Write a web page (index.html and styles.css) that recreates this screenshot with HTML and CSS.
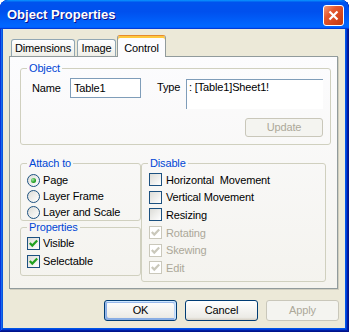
FILE: index.html
```html
<!DOCTYPE html>
<html>
<head>
<meta charset="utf-8">
<link rel="stylesheet" href="styles.css">
</head>
<body>
<div class="window">
  <div class="titlebar">
    <span class="title">Object Properties</span>
    <span class="close"><svg width="13" height="13" viewBox="0 0 13 13"><path d="M2.5 2.5 L10.5 10.5 M10.5 2.5 L2.5 10.5" stroke="#fff" stroke-width="2.2" fill="none"/></svg></span>
  </div>
  <div class="client">
    <div class="tabs">
      <div class="tab t-dim">Dimensions</div>
      <div class="tab t-img">Image</div>
      <div class="tab sel">Control</div>
    </div>
    <div class="panel">
      <fieldset class="grp g-object">
        <legend>Object</legend>
        <div class="gbody">
          <div class="obj-row">
            <span class="lbl-name">Name</span>
            <div class="input">Table1</div>
            <span class="lbl-type">Type</span>
            <div class="typebox">: [Table1]Sheet1!</div>
          </div>
          <div class="upd-row"><div class="btn dis upd">Update</div></div>
        </div>
      </fieldset>
      <div class="cols">
        <div class="leftcol">
          <fieldset class="grp g-attach">
            <legend>Attach to</legend>
            <div class="gbody">
              <div class="row r16"><span class="radio on"></span><span>Page</span></div>
              <div class="row r16"><span class="radio"></span><span>Layer Frame</span></div>
              <div class="row r16"><span class="radio"></span><span>Layer and Scale</span></div>
            </div>
          </fieldset>
          <fieldset class="grp g-props">
            <legend>Properties</legend>
            <div class="gbody">
              <div class="row r18"><span class="cb"><svg width="11" height="11" viewBox="0 0 11 11"><path d="M1.8 5 L4.3 7.6 L9.2 2.6" stroke="#21a121" stroke-width="2.2" fill="none"/></svg></span><span>Visible</span></div>
              <div class="row r18"><span class="cb"><svg width="11" height="11" viewBox="0 0 11 11"><path d="M1.8 5 L4.3 7.6 L9.2 2.6" stroke="#21a121" stroke-width="2.2" fill="none"/></svg></span><span>Selectable</span></div>
            </div>
          </fieldset>
        </div>
        <fieldset class="grp g-disable">
          <legend>Disable</legend>
          <div class="gbody">
            <div class="row r17"><span class="cb"></span><span>Horizontal&nbsp; Movement</span></div>
            <div class="row r17"><span class="cb"></span><span>Vertical Movement</span></div>
            <div class="row r17"><span class="cb"></span><span>Resizing</span></div>
            <div class="row r17 off"><span class="cb"><svg width="11" height="11" viewBox="0 0 11 11"><path d="M1.8 5 L4.3 7.6 L9.2 2.6" stroke="#cac8bb" stroke-width="2.2" fill="none"/></svg></span><span>Rotating</span></div>
            <div class="row r17 off"><span class="cb"><svg width="11" height="11" viewBox="0 0 11 11"><path d="M1.8 5 L4.3 7.6 L9.2 2.6" stroke="#cac8bb" stroke-width="2.2" fill="none"/></svg></span><span>Skewing</span></div>
            <div class="row r17 off"><span class="cb"><svg width="11" height="11" viewBox="0 0 11 11"><path d="M1.8 5 L4.3 7.6 L9.2 2.6" stroke="#cac8bb" stroke-width="2.2" fill="none"/></svg></span><span>Edit</span></div>
          </div>
        </fieldset>
      </div>
    </div>
    <div class="buttons">
      <div class="btn def">OK</div>
      <div class="btn">Cancel</div>
      <div class="btn dis">Apply</div>
    </div>
  </div>
</div>
</body>
</html>
```
FILE: styles.css
```css
* { box-sizing: border-box; }
html, body { margin: 0; padding: 0; background: #fff; }
body {
  width: 349px; height: 332px; overflow: hidden;
  font-family: "Liberation Sans", Arial, sans-serif;
  font-size: 11px; letter-spacing: -0.15px; color: #000;
}
.window {
  width: 349px; height: 332px;
  display: flex; flex-direction: column;
  border-radius: 8px 8px 0 0; overflow: hidden;
  background: #0055e5;
  box-shadow: inset -1px -1px #00138c, inset 1px 1px #0831d9,
              inset -2px -2px #001ea0, inset 2px 2px #166aee,
              inset -3px -3px #003bda, inset 3px 3px #0855dd;
}
.titlebar {
  height: 29px; flex: none;
  display: flex; align-items: flex-start; justify-content: space-between;
  padding: 0 5px 0 7px;
  border-radius: 8px 8px 0 0;
  background: linear-gradient(180deg, #0997ff, #0053ee 8%, #0050ee 40%, #06f 88%, #06f 93%, #005bff 95%, #003dd7 96%, #003dd7);
}
.title {
  margin-top: 7px;
  font: bold 13px/15px "Liberation Sans", Arial, sans-serif;
  letter-spacing: 0; color: #fff;
  text-shadow: 1px 1px #0f1089;
}
.close {
  margin-top: 5px; width: 21px; height: 21px;
  border: 1px solid #fff; border-radius: 3px;
  background: linear-gradient(135deg, #f39a78 0%, #e4582f 35%, #d4451c 70%, #c13a10 100%);
  display: flex; align-items: center; justify-content: center;
}
.client {
  flex: 1; margin: 0 4px 4px 3px;
  background: #ece9d8;
  display: flex; flex-direction: column;
}
.tabs {
  display: flex; align-items: flex-end;
  height: 21px; margin: 6px 0 0 8px;
  position: relative; z-index: 1;
}
.tab {
  height: 17px; border: 1px solid #91a7b4; border-bottom: none;
  border-radius: 3px 3px 0 0;
  background: linear-gradient(180deg, #fff, #fafaf9 26%, #f0f0ea 95%, #ecebe5);
  text-align: center; padding-top: 2px; line-height: 13px;
}
.t-dim { width: 64px; }
.t-img { width: 39px; margin-left: 2px; }
.tab.sel {
  width: 49px; margin-left: 1px; height: 22px; margin-bottom: -1px;
  border-color: #919b9c; border-top-color: #e68b2c;
  box-shadow: inset 0 2px #ffc83c;
  background: #fcfcfe; padding-top: 6px;
}
.panel {
  width: 329px; height: 233px; margin-left: 6px;
  border: 1px solid #919b9c;
  background: linear-gradient(180deg, #fcfcfe, #f4f3ee);
  box-shadow: 1px 1px 0 #d0cebf;
  padding: 5px 0 0 10px;
}
fieldset.grp {
  margin: 0; padding: 0; min-width: 0;
  border: 1px solid #d0d0bf; border-radius: 3px;
}
legend {
  margin-left: 6px; padding: 0 2px;
  color: #0046d5; line-height: 13px;
}
.g-object { width: 311px; }
.g-object .gbody { padding: 3px 7px 7px 11px; }
.obj-row { display: flex; align-items: flex-start; }
.lbl-name { width: 38px; line-height: 20px; }
.input {
  width: 71px; height: 20px; border: 1px solid #7f9db9; background: #fff;
  padding-left: 3px; line-height: 18px;
}
.lbl-type { width: 29px; margin-left: 16px; line-height: 19px; }
.typebox {
  width: 137px; height: 30px; margin-top: 1px;
  border-top: 1px solid #7f9db9; border-left: 1px solid #7f9db9;
  background: #fff; padding-left: 2px; line-height: 14px;
}
.upd-row { display: flex; justify-content: flex-end; margin-top: 9px; }
.btn {
  width: 73px; height: 21px;
  border: 1px solid #003c74; border-radius: 3px;
  background: linear-gradient(180deg, #fff, #ecebe6 86%, #d6d0c5);
  text-align: center; line-height: 19px;
}
.btn.upd { width: 78px; height: 19px; line-height: 17px; }
.btn.dis { background: #f4f4f0; border-color: #c9c7ba; color: #aca899; }
.btn.def {
  box-shadow: inset -1px 1px #cee7ff, inset 1px 2px #98b8ea, inset -2px 2px #bcd4f6,
              inset 1px -1px #89ade4, inset 2px -2px #89ade4;
}
.cols { display: flex; margin-top: 12px; }
.leftcol { width: 121px; display: flex; flex-direction: column; }
.g-disable { width: 185px; margin-left: 5px; }
.g-attach .gbody { padding: 2px 0 0 6px; }
.g-props { margin-top: 6px; }
.g-props .gbody { padding: 0 0 5px 6px; }
.g-disable .gbody { padding: 1px 0 4px 7px; }
.row { display: flex; align-items: center; }
.r16 { height: 16px; }
.r18 { height: 18px; }
.r17 { height: 17.6px; }
.radio {
  width: 13px; height: 13px; flex: none; margin-right: 3px;
  border-radius: 50%; border: 1px solid #1c5180;
  background: linear-gradient(135deg, #dcdcd7, #fff);
  display: flex; align-items: center; justify-content: center;
}
.radio.on::after {
  content: ""; width: 5px; height: 5px; border-radius: 50%;
  background: radial-gradient(circle at 35% 35%, #a6e3a6, #21a121 60%, #1a8a1a);
}
.cb {
  width: 13px; height: 13px; flex: none; margin-right: 3px;
  border: 1px solid #1c5180;
  background: linear-gradient(135deg, #dcdcd7, #fff);
  display: flex;
}
.g-disable .cb { margin-right: 4px; }
.off { color: #aca899; }
.off .cb { border-color: #cac8bb; background: #fff; }
.buttons {
  display: flex; justify-content: flex-end; gap: 8px;
  margin-top: 11px; padding-right: 6px;
}
```
